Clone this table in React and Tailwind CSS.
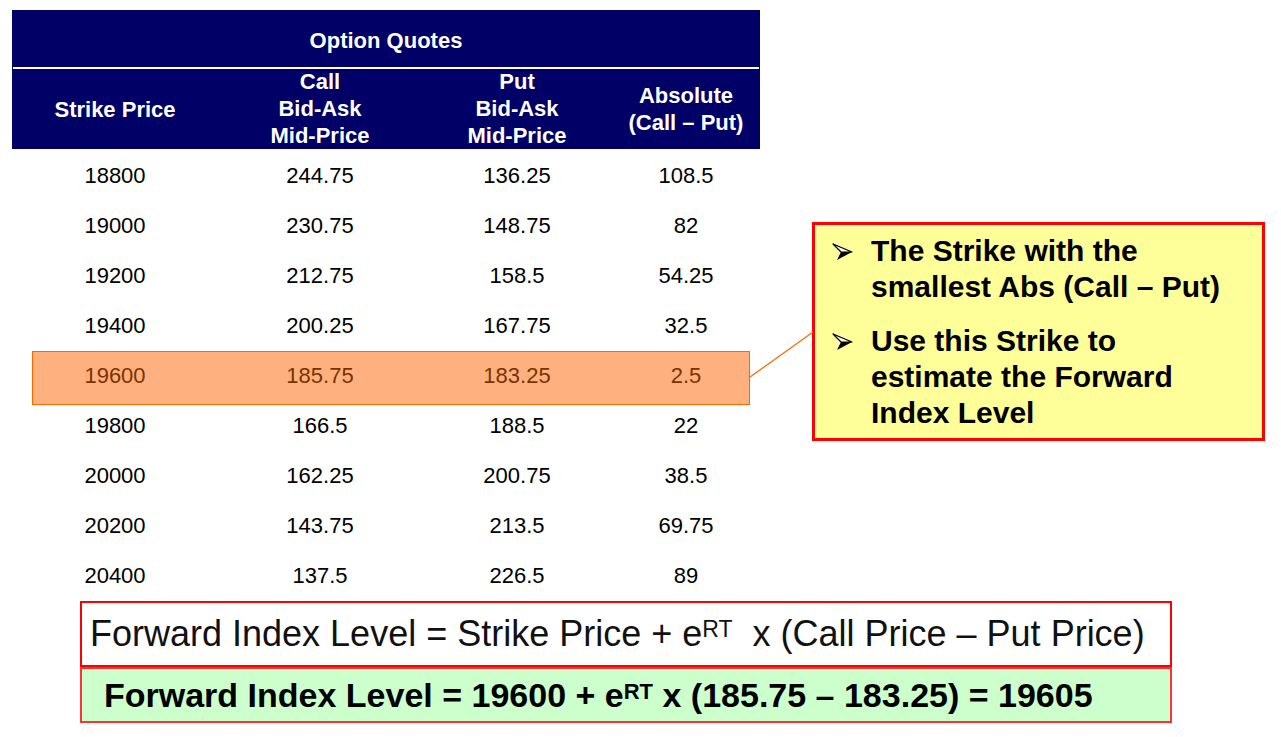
import React from "react"

// Strike / call / put / abs rows
const ROWS = [
  ["18800", "244.75", "136.25", "108.5"],
  ["19000", "230.75", "148.75", "82"],
  ["19200", "212.75", "158.5", "54.25"],
  ["19400", "200.25", "167.75", "32.5"],
  ["19600", "185.75", "183.25", "2.5", true],
  ["19800", "166.5", "188.5", "22"],
  ["20000", "162.25", "200.75", "38.5"],
  ["20200", "143.75", "213.5", "69.75"],
  ["20400", "137.5", "226.5", "89"],
]

const COLS = "grid grid-cols-[206px_204px_190px_148px]"

const Arrow = () => (
  <svg width="22" height="18" viewBox="0 0 22 18" className="shrink-0 mt-[10px]">
    <path d="M1 1 L20 9 L5 17 L9 9 Z" fill="#000" />
    <path d="M1 1 L20 9 L9 9 Z" fill="#fff" stroke="#000" strokeWidth="1.2" strokeLinejoin="round" />
  </svg>
)

export default function App() {
  return (
    <div
      className="w-[1281px] h-[737px] bg-white overflow-hidden relative"
      style={{ fontFamily: '"Liberation Sans", Arial, sans-serif' }}
    >
      <div className="flex items-start">
        {/* Tableau des cotations */}
        <div className="ml-[12px] mt-[10px] w-[748px]">
          <div className="bg-[#000066] h-[57px] pt-[3px] flex items-center justify-center text-white font-bold text-[22px]">
            Option Quotes
          </div>
          <div className="h-[2px] bg-white border-x border-[#000066]" />
          <div className={`${COLS} bg-[#000066] h-[80px] text-white font-bold text-[22px] leading-[27px] text-center items-center`}>
            <div>Strike Price</div>
            <div className="mt-[-1px]">Call<br />Bid-Ask<br />Mid-Price</div>
            <div className="mt-[-1px]">Put<br />Bid-Ask<br />Mid-Price</div>
            <div>Absolute<br />(Call – Put)</div>
          </div>
          <div className="pt-[1px]">
            {ROWS.map(([k, c, p, a, hl]) => (
              <div key={k} className="relative h-[50px]">
                {hl && (
                  <div className="absolute left-[20px] right-[10px] top-[1px] h-[54px] bg-[#FFB07F] border border-[#FF6600]" />
                )}
                <div className={`${COLS} relative h-full items-center text-center text-[22px] ${hl ? "text-[#7A3300]" : "text-black"}`}>
                  <div>{k}</div>
                  <div>{c}</div>
                  <div>{p}</div>
                  <div>{a}</div>
                </div>
              </div>
            ))}
          </div>
        </div>

        {/* Encadré explicatif */}
        <div className="ml-[52px] mt-[222px] w-[453px] h-[219px] bg-[#FFFF99] border-[3px] border-[#FF0000] pl-[17px] pt-[8px] text-[30px] font-bold leading-[36px] text-black">
          <div className="flex gap-[17px]">
            <Arrow />
            <div>The Strike with the<br />smallest Abs (Call – Put)</div>
          </div>
          <div className="flex gap-[17px] mt-[18px]">
            <Arrow />
            <div>Use this Strike to<br />estimate the Forward<br />Index Level</div>
          </div>
        </div>
      </div>

      {/* Trait de liaison */}
      <svg className="absolute left-0 top-0 pointer-events-none" width="1281" height="737">
        <line x1="750" y1="377" x2="813" y2="332" stroke="#FF6600" strokeWidth="1.2" />
      </svg>

      {/* Formules */}
      <div className="ml-[80px] mt-[1px] w-[1092px]">
        <div className="h-[66px] border-2 border-[#FF0000] bg-white flex items-center pl-[8px] text-[36px] text-[#111] whitespace-nowrap">
          Forward Index Level = Strike Price + e<sup className="text-[23px] relative top-[-5px]">RT</sup>&nbsp; x (Call Price – Put Price)
        </div>
        <div className="h-[56px] border-2 border-[#FF3333] bg-[#CCFFCC] flex items-center pl-[22px] text-[34px] font-bold text-black whitespace-nowrap">
          Forward Index Level = 19600 + e<sup className="text-[22px] relative top-[-3px]">RT</sup>&nbsp;x (185.75 – 183.25) = 19605
        </div>
      </div>
    </div>
  )
}
